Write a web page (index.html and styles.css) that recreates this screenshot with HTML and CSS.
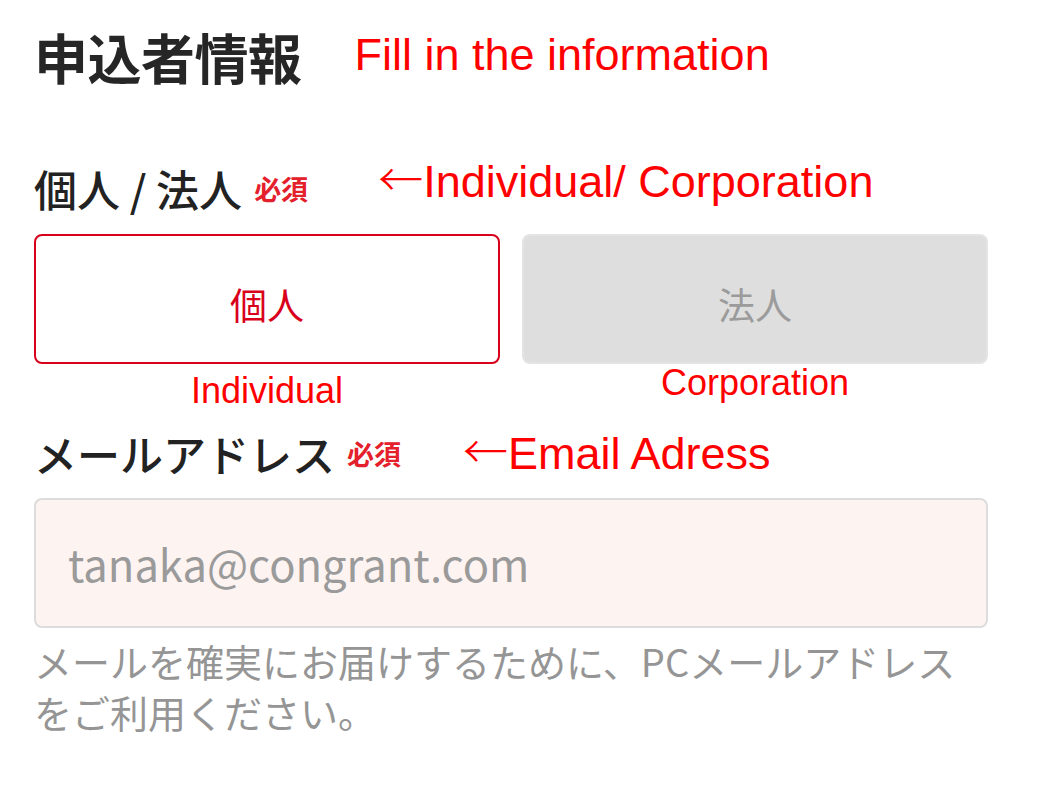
FILE: index.html
```html
<!DOCTYPE html>
<html lang="ja">
<head>
    <meta charset="UTF-8">
    <title>申込者情報</title>
    <link rel="stylesheet" href="styles.css">
</head>
<body>

<div class="page">
    <div class="title-row">
        <h1>申込者情報</h1>
        <span class="note note-title">Fill in the information</span>
    </div>

    <div class="label-row label-type">
        <label>個人 / 法人<span class="req">必須</span></label>
        <span class="note note-type"><span class="arrow">&larr;</span>Individual/ Corporation</span>
    </div>

    <div class="choices">
        <div class="choice">
            <button class="choice-btn active">個人</button>
            <span class="note-sm note-left">Individual</span>
        </div>
        <div class="choice">
            <button class="choice-btn">法人</button>
            <span class="note-sm note-right">Corporation</span>
        </div>
    </div>

    <div class="label-row label-mail">
        <label for="email">メールアドレス<span class="req">必須</span></label>
        <span class="note note-mail"><span class="arrow">&larr;</span>Email Adress</span>
    </div>

    <input type="email" id="email" placeholder="tanaka@congrant.com">

    <p class="help">メールを確実にお届けするために、PCメールアドレスをご利用ください。</p>
</div>

</body>
</html>
```

FILE: styles.css
```css
body {
    margin: 0;
    background-color: #fff;
    font-family: "Noto Sans CJK JP", "Noto Sans", sans-serif;
    color: #262626;
}
.page {
    width: 954px;
    padding: 22px 0 0 34px;
}
.title-row,
.label-row {
    display: flex;
    align-items: flex-start;
}
h1 {
    margin: 0;
    font-size: 54px;
    line-height: 70px;
    font-weight: 700;
    letter-spacing: -0.5px;
}
.note {
    font-family: "Liberation Sans", Arial, sans-serif;
    font-size: 45px;
    line-height: 50px;
    color: #ff0000;
    white-space: nowrap;
}
.note .arrow {
    font-family: "Noto Sans CJK JP", sans-serif;
    font-weight: 300;
    line-height: 1;
}
.note-title {
    margin: 8px 0 0 53px;
}
.note-type {
    margin: -5px 0 0 70px;
}
.note-mail {
    margin: 2px 0 0 62px;
}
.label-row label {
    display: flex;
    align-items: center;
    height: 56px;
    font-size: 43px;
    font-weight: 500;
    color: #222;
}
.label-type {
    margin-top: 68px;
}
.label-mail {
    margin-top: 14px;
}
.req {
    font-size: 27px;
    line-height: 1;
    font-weight: 700;
    color: #e3202b;
    margin-left: 12px;
}
.choices {
    display: grid;
    grid-template-columns: 1fr 1fr;
    gap: 22px;
    margin-top: 18px;
}
.choice {
    display: flex;
    flex-direction: column;
    align-items: center;
}
.choice-btn {
    width: 100%;
    height: 130px;
    padding-top: 10px;
    box-sizing: border-box;
    border: 2px solid #e4e4e4;
    border-radius: 8px;
    background-color: #dedede;
    color: #9b9b9b;
    font-family: "Noto Sans CJK JP", sans-serif;
    font-size: 37px;
    cursor: pointer;
}
.choice-btn.active {
    border-color: #d9001b;
    background-color: #fff;
    color: #d9001b;
}
.note-sm {
    font-family: "Liberation Sans", Arial, sans-serif;
    font-size: 36px;
    line-height: 40px;
    color: #ff0000;
}
.note-left {
    margin-top: 7px;
}
.note-right {
    margin-top: -1px;
}
input[type='email'] {
    display: block;
    width: 100%;
    height: 130px;
    margin-top: 17px;
    padding: 0 32px;
    box-sizing: border-box;
    border: 2px solid #dcdcdc;
    border-radius: 8px;
    background-color: #fdf3f1;
    font-family: "Noto Sans CJK JP", sans-serif;
    font-size: 43.5px;
    color: #333;
}
input::placeholder {
    color: #9a9a9a;
}
.help {
    margin: 7px 0 0;
    font-size: 38px;
    line-height: 51px;
    color: #959595;
}
```
